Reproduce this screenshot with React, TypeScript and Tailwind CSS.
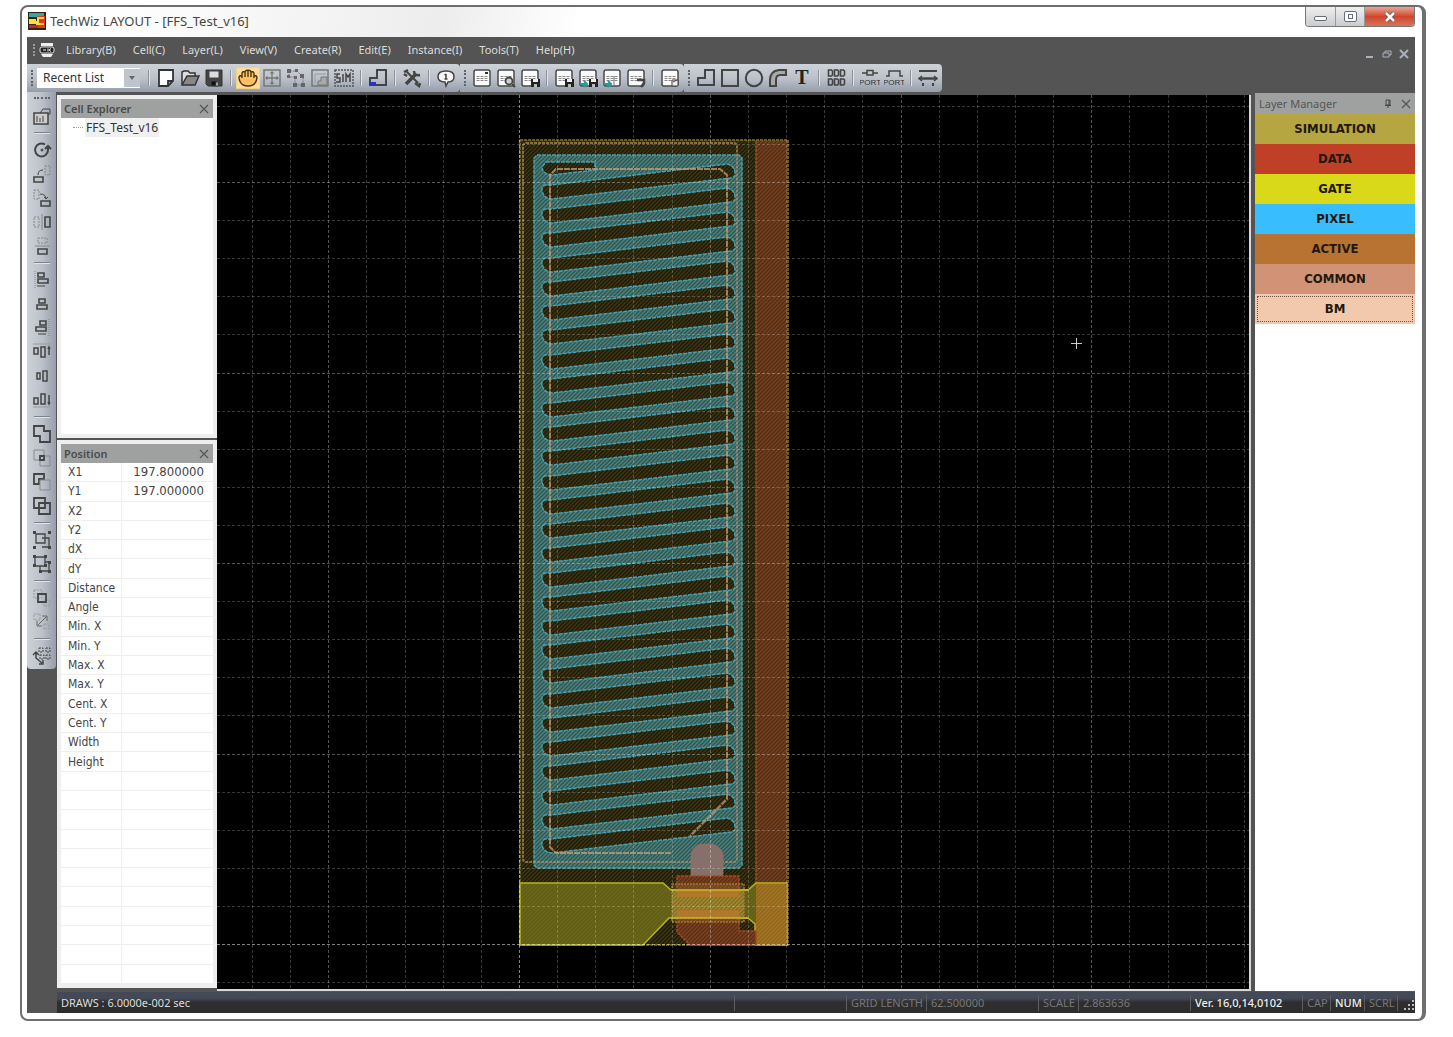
import type { ReactNode } from "react"
import { clsx } from "clsx"

const ui = "font-['Noto_Sans','Open_Sans',sans-serif]"
const tahoma = "font-['DejaVu_Sans_Condensed','DejaVu_Sans',sans-serif]"

const menus = ["Library(B)", "Cell(C)", "Layer(L)", "View(V)", "Create(R)", "Edit(E)", "Instance(I)", "Tools(T)", "Help(H)"]

const layers = [
  { name: "SIMULATION", color: "bg-[#b5a642]" },
  { name: "DATA", color: "bg-[#bf4027]" },
  { name: "GATE", color: "bg-[#d9d919]" },
  { name: "PIXEL", color: "bg-[#38bdff]" },
  { name: "ACTIVE", color: "bg-[#b87333]" },
  { name: "COMMON", color: "bg-[#d19275]" },
  { name: "BM", color: "bg-[#f3c9ad]" },
]

const positionRows = [
  ["X1", "197.800000"], ["Y1", "197.000000"], ["X2", ""], ["Y2", ""], ["dX", ""], ["dY", ""],
  ["Distance", ""], ["Angle", ""], ["Min. X", ""], ["Min. Y", ""], ["Max. X", ""], ["Max. Y", ""],
  ["Cent. X", ""], ["Cent. Y", ""], ["Width", ""], ["Height", ""],
  ...Array.from({ length: 11 }, () => ["\u00a0", ""]),
]

// Small dialog sheet shared by all the cell commands
const sheet = (
  <g>
    <rect x="2" y="2" width="16" height="16" rx="2" fill="#fafafa" stroke="#4a4a4a" strokeWidth="1.5" />
    <path d="M4.500 8.500h11M4.500 10.500h11M4.500 12.500h11" stroke="#8a8a8a" strokeDasharray="3 1" />
  </g>
)
const disk = (
  <g stroke="none">
    <rect x="11" y="11" width="9" height="8" fill="#222" />
    <rect x="13" y="11" width="5" height="3" fill="#eee" />
    <rect x="14" y="16" width="3" height="3" fill="#bbb" />
  </g>
)
const greenArrow = <path d="M2 16h7M6 13l3 3-3 3" stroke="#2b9a94" strokeWidth="2" />

type Tool = { name: string; icon: ReactNode; active?: boolean; dim?: boolean }

const fileTools: (Tool | null)[] = [
  { name: "New", icon: <path d="M3 2h14v11l-5 5H3zM17 13h-5v5" fill="#fff" stroke="#333" strokeWidth="1.800" /> },
  { name: "Open", icon: <g stroke="#333" strokeWidth="1.500"><path d="M2 16V4l2-1h4l2 2h5v3" fill="#ddd" /><path d="M2 17L7 8h12l-4 9z" fill="#888" /></g> },
  { name: "Save", icon: <g><path d="M2 2h16v16H4l-2-2z" fill="#444" stroke="#333" /><path d="M5 3h10v7H5z" fill="#ddd" /><path d="M7 13h7v5H7z" fill="#111" /><path d="M12 14h2v4h-2z" fill="#fff" /></g> },
  null,
  { name: "Pan", active: true, icon: <path d="M5 17Q1 14 1 9q1-2 3-1V5q1-2 3-1 1-2.500 3-1.500 2-1 3 1.500 2-1 3 1v3q2-1 3 1 0 5-4 8-5 2-10 0zM4 8v2M7 4v5M10 3v6M13 4v5M16 5v5" fill="#ffc064" stroke="#4a3510" strokeWidth="1.400" /> },
  { name: "Fit", dim: true, icon: <g><rect x="2" y="2" width="16" height="16" strokeWidth="1.500" /><path d="M10 4v12M4 10h12M8.500 5.500L10 4l1.500 1.500M8.500 14.500L10 16l1.500-1.500M5.500 8.500L4 10l1.500 1.500M14.500 8.500L16 10l-1.500 1.500" strokeWidth="1.300" /></g> },
  { name: "Edit points", dim: true, icon: <g><path d="M3 8V3h8M11 3l6 6v8H9V9H3" strokeDasharray="2 1" /><path d="M1 1h4v4H1zM9 1h3v3H9zM14 6h4v4h-4zM15 15h4v4h-4zM7 15h4v4H7zM1 7h3v3H1zM8 8h3v3H8z" fill="#666" stroke="none" /></g> },
  { name: "Zoom window", dim: true, icon: <g><rect x="2" y="2" width="16" height="16" strokeWidth="1.500" /><path d="M5 15V6h11" stroke="#999" /><path d="M11 9h6v8H8v-4h3z" fill="#aaa" /></g> },
  { name: "Simulation area", icon: <g stroke="#555"><rect x="1" y="2" width="18" height="16" strokeDasharray="2 1" strokeWidth="1.500" /><path d="M6 6H3v4h3v4H2M9 6v8M12 14V6l2 3 2-3v8" stroke="#444" strokeWidth="1.500" /></g> },
  null,
  { name: "Origin", icon: <g><path d="M2 17v-7h7V2h9v15z" strokeWidth="2" /><path d="M1 14h7v4H1z" fill="#2733c9" stroke="none" /></g> },
  null,
  { name: "Options", icon: <g><path d="M4 3l12 12" strokeWidth="2" /><path d="M14 6L4 16" strokeWidth="3.500" /><path d="M12 3q0 5 6 4M2 4l4-2M13 15l4 3 1-3M2 6l3 2" strokeWidth="2.500" /><path d="M7 13l3-3" stroke="#3a3f96" /></g> },
  null,
  { name: "Help", icon: <g><path d="M9 14Q2 14 2 8.500T10 3t8 5.500-6 5.500l-2 4z" fill="#f5f5f5" strokeWidth="1.500" /><path d="M10 6v5M8.500 7L10 6M8.500 11h3" strokeWidth="1.500" /></g> },
]

const cellTools: (Tool | null)[] = [
  { name: "Cell", icon: <g>{sheet}<path d="M13 4h3v2h-3z" fill="#333" stroke="none" /></g> },
  { name: "Find cell", icon: <g>{sheet}<circle cx="13" cy="13" r="3.500" fill="#ccc" strokeWidth="1.800" /><path d="M16 16l3 3" strokeWidth="2" /></g> },
  { name: "Save cell", icon: <g>{sheet}{disk}</g> },
  null,
  { name: "Save library", icon: <g>{sheet}{disk}</g> },
  { name: "Export library", icon: <g>{sheet}{disk}{greenArrow}</g> },
  { name: "Import library", icon: <g>{sheet}{greenArrow}<path d="M12 8v9" stroke="#777" /></g> },
  { name: "Convert", icon: <g>{sheet}<path d="M11 12h7v3l-3 4" strokeWidth="2.500" /></g> },
  null,
  { name: "Report", icon: <g>{sheet}<path d="M12 12h6v6h-6z" fill="#eee" /><path d="M13 14l4-2" /></g> },
]

const drawTools: (Tool | null)[] = [
  { name: "Polygon", icon: <path d="M2 17V10h7V2h9v15z" strokeWidth="2" /> },
  { name: "Rectangle", icon: <rect x="2" y="2" width="16" height="16" strokeWidth="2" /> },
  { name: "Circle", icon: <circle cx="10" cy="10" r="8.200" strokeWidth="2" /> },
  { name: "Path", icon: <path d="M2 18v-6q0-9 9-10h7v5h-6q-4 0-4 5v6z" fill="#aaa" strokeWidth="2" /> },
  { name: "Text", icon: <text x="10" y="16" textAnchor="middle" fill="#222" stroke="none" className="font-['Liberation_Serif',serif] text-[20px] font-bold">T</text> },
  null,
  { name: "Array", icon: <path d="M2.500 2v6h3l1-1V3l-1-1zM8.500 2v6h3l1-1V3l-1-1zM14.500 2v6h3l1-1V3l-1-1zM2.500 11v6h3l1-1v-4l-1-1zM8.500 11v6h3l1-1v-4l-1-1zM14.500 11v6h3l1-1v-4l-1-1z" strokeWidth="1.600" /> },
  null,
  { name: "Port", icon: <g><path d="M2 5h5M13 5h5M7 2.500h6V7H7z" strokeWidth="1.500" /><text x="10" y="17" textAnchor="middle" fill="#333" stroke="none" className="font-['Liberation_Sans',sans-serif] text-[8px]">PORT</text></g> },
  { name: "Port edge", icon: <g><path d="M2 8h3V3h11v5h3" strokeWidth="1.500" /><text x="10" y="17" textAnchor="middle" fill="#333" stroke="none" className="font-['Liberation_Sans',sans-serif] text-[8px]">PORT</text></g> },
  null,
  { name: "Ruler", icon: <g><path d="M1 3h18" strokeWidth="2" /><path d="M2 10.500h16" strokeWidth="2.500" /><path d="M4 8l-3 2.500L4 13M16 8l3 2.500-3 2.500" strokeWidth="1.500" /><path d="M5 15v3M15 15v3" strokeWidth="2" /></g> },
]

const sideTools: (Tool | null)[] = [
  { name: "Properties", icon: <g><path d="M2 7h14v11H2z" fill="#ccc" strokeWidth="1.500" /><path d="M8 7l3-4h7v5h-2M5 10v6M8 12v4M11 10v6" /></g> },
  null,
  { name: "Rotate", icon: <g><path d="M13 4.500A6.500 6.500 0 1 0 16 10V7M13 9l3-3 3 3" strokeWidth="2" /><circle cx="10" cy="10" r="1.500" fill="#555" stroke="none" /></g> },
  { name: "Rotate left", icon: <g><path d="M2 13h9v5H2z" strokeWidth="1.600" /><path d="M6 11q0-5 5-5" /><path d="M13 2h5v9h-5z" stroke="#888" strokeDasharray="2 1" /></g> },
  { name: "Rotate right", icon: <g><path d="M9 13h9v5H9z" strokeWidth="1.600" /><path d="M8 6q6 0 6 5M12 9l2 2 2-2" /><path d="M2 2h5v9H2z" stroke="#888" strokeDasharray="2 1" /></g> },
  { name: "Flip horizontal", icon: <g><path d="M13 5h5v10h-5z" strokeWidth="1.600" /><path d="M2 5h5v10H2z" stroke="#888" strokeDasharray="2 1" /><path d="M10 2v16" stroke="#888" /></g> },
  { name: "Flip vertical", icon: <g><path d="M6 13h9v5H6z" strokeWidth="1.600" /><path d="M6 2h9v5H6z" stroke="#888" strokeDasharray="2 1" /><path d="M3 10h15" stroke="#888" /></g> },
  null,
  { name: "Align left", icon: <g><path d="M6 3h6v4H6zM6 9h10v4H6z" strokeWidth="1.600" /><path d="M3 1v17" stroke="#888" strokeDasharray="1 1" /><path d="M5 16h8" /></g> },
  { name: "Align center", icon: <path d="M7 5h6v4H7zM5 11h10v4H5z" strokeWidth="1.600" /> },
  { name: "Align right", icon: <g><path d="M8 3h6v4H8zM4 9h10v4H4z" strokeWidth="1.600" /><path d="M17 1v17" stroke="#888" strokeDasharray="1 1" /><path d="M6 16h8" /></g> },
  { name: "Align top", icon: <g><path d="M2 6h4v6H2zM9 5h4v10H9zM17 5v8M16 7l1-2 1 2" strokeWidth="1.500" /><path d="M1 2h17" stroke="#999" /></g> },
  { name: "Align middle", icon: <path d="M5 7h3v6H5zM11 5h4v10h-4z" strokeWidth="1.500" /> },
  { name: "Align bottom", icon: <g><path d="M2 8h4v6H2zM9 4h4v10H9zM17 5v9M16 12l1 2 1-2" strokeWidth="1.500" /><path d="M1 17h17" stroke="#999" /></g> },
  null,
  { name: "Union", icon: <path d="M2 2h10v5h6v11H8v-6H2z" strokeWidth="1.800" /> },
  { name: "Intersect", icon: <g><path d="M2 2h10v10H2zM8 8h10v10H8z" stroke="#888" /><path d="M8 8h4v4H8z" strokeWidth="1.800" /></g> },
  { name: "Subtract", icon: <g><path d="M2 2h10v5H7v5H2z" strokeWidth="1.800" /><path d="M8 8h10v10H8z" stroke="#888" /></g> },
  { name: "Exclude", icon: <path d="M2 2h11v10H2zM7 7h11v11H7z" strokeWidth="1.800" /> },
  null,
  { name: "Group", icon: <g><path d="M4 4h9v9H4zM10 8h7v9h-7" strokeWidth="1.300" /><path d="M1 1h3v3H1zM16 1h3v3h-3zM1 16h3v3H1zM16 16h3v3h-3z" fill="#444" stroke="none" /></g> },
  { name: "Ungroup", icon: <g><path d="M3 3h10v9H3zM8 12v5h9V8h-4" strokeWidth="1.300" /><path d="M1 1h3v3H1zM12 1h3v3h-3zM1 10h3v3H1zM12 10h3v3h-3zM7 16h3v3H7zM16 16h3v3h-3zM16 7h3v3h-3z" fill="#444" stroke="none" /></g> },
  null,
  { name: "Bring forward", icon: <g><path d="M2 2h8v8H2zM12 12h6v6h-6z" stroke="#999" strokeDasharray="2 1" /><path d="M6 6h8v8H6z" strokeWidth="1.800" /></g> },
  { name: "Swap", icon: <g><path d="M2 2h6v6H2zM12 12h5v5h-5z" stroke="#999" strokeDasharray="2 1" /><path d="M6 13l8-8M10 4h5v5M5 9v5h5" stroke="#666" /></g> },
  null,
  { name: "Duplicate array", icon: <g><path d="M7 2h4v4H7zM14 2h4v4h-4zM14 9h4v4h-4zM8 9h4v4H8z" strokeDasharray="2 1" /><path d="M4 6v6l6 5M1 9l3-3 3 3M7 18h4v-4" strokeWidth="1.500" /></g> },
]

function ToolButton({ tool }: { tool: Tool }) {
  return (
    <button
      type="button"
      aria-label={tool.name}
      className={clsx(
        "flex h-[22px] w-6 shrink-0 items-center justify-center",
        tool.active && "border border-[#f5d087] bg-[#ffdc98]",
      )}
    >
      <svg viewBox="0 0 20 20" className="size-5 shrink-0" fill="none" stroke={tool.dim ? "#777" : "#444"}>
        {tool.icon}
      </svg>
    </button>
  )
}

function ToolGroup({ tools, children }: { tools: (Tool | null)[]; children?: ReactNode }) {
  return (
    <div className="flex items-center rounded-r bg-linear-to-b from-[#cdd1d8] via-[#bdc2ca] to-[#969eaa] pr-[2px]">
      <div className="mx-1 h-4 w-[2px] border-l-2 border-dotted border-[#5f646c]" />
      {children}
      {tools.map((tool, i) =>
        tool ? (
          <ToolButton key={i} tool={tool} />
        ) : (
          <div key={i} className="mx-1 h-4 w-[2px] border-l border-r border-l-[#8b9099] border-r-[#e2e4e8]" />
        ),
      )}
    </div>
  )
}

function PanelTitle({ title }: { title: string }) {
  return (
    <div className={clsx("flex h-[19px] shrink-0 items-center justify-between bg-[#9fa1a0] pl-[3px] pr-1 text-[11px] font-semibold leading-4 text-[#4a4a4a]", ui)}>
      <h2>{title}</h2>
      <CloseButton label={"Close " + title} />
    </div>
  )
}

function CloseButton({ label }: { label: string }) {
  return (
    <button type="button" aria-label={label}>
      <svg viewBox="0 0 10 10" className="size-[10px]" stroke="#555" strokeWidth="1.200">
        <path d="M1 1l8 8M9 1L1 9" />
      </svg>
    </button>
  )
}

const slitPath = (y: number) =>
  `M542 ${y + 6}Q541 ${y + 2} 545 ${y}L551 ${y}L727 ${y - 21}Q735 ${y - 19} 735 ${y - 12}Q736 ${y - 8} 731 ${y - 7}L552 ${y + 14}Q544 ${y + 14} 542 ${y + 6}Z`

function Hatch({ id, base, line }: { id: string; base: string; line: string }) {
  return (
    <pattern id={id} width="4" height="4" patternUnits="userSpaceOnUse">
      <rect width="4" height="4" fill={base} />
      <path d="M-1 1l2-2M0 4l4-4M3 5l2-2" stroke={line} strokeWidth="1.300" />
    </pattern>
  )
}

function LayoutCanvas() {
  const slits = Array.from({ length: 28 }, (_, i) => slitPath(Math.round(185 + i * 24.22))).join("")
  const comb = `M537 155H739L742 158V865L739 868H537L534 865V158ZM546 162H595V170L552 175Q542 174 542 167Z${slits}`
  const gate = "M520 883H663L671 890H748L756 883H787V945H755V924L748 918H669L643 945H520Z"
  const lines = Array.from({ length: 60 }, (_, i) => i - 14)

  return (
    <svg className="size-full bg-black" role="img" aria-label="FFS_Test_v16 layout">
      <defs>
        <Hatch id="sim" base="#1d1a0b" line="#40370f" />
        <Hatch id="data" base="#532e16" line="#78401e" />
        <Hatch id="pixel" base="#315652" line="#4b837e" />
        <Hatch id="gate" base="#605d14" line="#6b6617" />
        <Hatch id="overlap" base="#8e661b" line="#a87623" />
        <Hatch id="active" base="#7d7020" line="#a98a2e" />
        <Hatch id="source" base="#5c2e16" line="#7d4220" />
      </defs>
      <g transform="translate(-217 -95)" fill="none">
        <rect x="520" y="140" width="268" height="805" fill="url(#sim)" stroke="#857723" strokeWidth="1.500" strokeDasharray="3 1" />
        <rect x="756" y="141" width="31" height="804" fill="url(#data)" />
        <path d="M756 141V945" stroke="#a04c27" strokeWidth="1.500" strokeDasharray="3 1" />
        <path d={comb} fill="url(#pixel)" fillRule="evenodd" stroke="#46a0b0" strokeWidth="1.500" strokeDasharray="4 1" />
        <rect x="523" y="143" width="214" height="719" rx="3" stroke="#b58b66" strokeOpacity="0.700" strokeWidth="2" strokeDasharray="3 1" />
        <path d="M671 853H556L550 847V175L556 169H720L727 175V799L690 836" stroke="#c79f7a" strokeOpacity="0.750" strokeWidth="2" strokeDasharray="6 1" />
        <path d={gate} fill="url(#gate)" stroke="#b8b51d" strokeWidth="1.500" />
        <rect x="756" y="884" width="31" height="61" fill="url(#overlap)" />
        <path d="M691 876V855Q693 845 702 844H711Q721 846 723 855V876Z" fill="#87706a" stroke="#a36a59" strokeDasharray="2 1" />
        <path d="M677 876H739V890H677Z" fill="url(#source)" stroke="#a84624" strokeWidth="1.500" strokeDasharray="3 1" />
        <path d="M677 917V932L690 945H756V931H739V917Z" fill="url(#source)" stroke="#a84624" strokeWidth="1.500" strokeDasharray="3 1" />
        <rect x="672" y="884" width="72" height="38" fill="#9b7430" fillOpacity="0.300" stroke="#a1762e" strokeWidth="1.500" strokeDasharray="2 1" />
        <path d="M672 890H744V918H672Z" fill="url(#active)" />
        <path d="M677 890h62v7h-62zM677 910h62v8h-62z" fill="#b0782a" />
        <path d="M677 910h62" stroke="#c8612a" strokeDasharray="3 1" />
        <path d="M671 890H748M671 918H748" stroke="#cdb828" strokeWidth="1.500" />
        {lines.map((n) => (
          <g key={n} stroke="#fff" strokeDasharray="3 2" strokeOpacity={n === 0 ? 0.5 : n % 5 === 0 ? 0.32 : 0.21}>
            <path d={`M${Math.round(519 + n * 38.15)}.5 95V3000`} />
            <path d={`M217 ${Math.round(944 - n * 38.1)}.5H4000`} />
          </g>
        ))}
        <path d="M1071 343.500h11M1076.500 338v11" stroke="#ccc" />
      </g>
    </svg>
  )
}

function TitleBar() {
  return (
    <header className="flex h-[30px] shrink-0 items-start justify-between bg-linear-100 from-white from-5% via-[#ededed] via-30% to-white to-40%">
      <div className="flex items-center gap-1 pl-px pt-[5px]">
        <svg viewBox="0 0 18 18" className="size-[18px]">
          <path d="M0 0h18v18H0z" fill="#2d2412" />
          <path d="M1 1h15v4H1z" fill="#35a79c" />
          <path d="M9 4h8v12H9z" fill="#e53520" />
          <path d="M1 7h7v5H1z" fill="#f2e33a" />
          <path d="M1 13h9v3H1z" fill="#c8281c" />
          <path d="M4 10h6V6h6M8 12h8M4 8v4" fill="none" stroke="#ffd94a" strokeWidth="2" />
        </svg>
        <h1 className={clsx("text-[13px] leading-4 text-[#444]", ui)}>TechWiz LAYOUT - [FFS_Test_v16]</h1>
      </div>
      <div className="flex h-5 overflow-hidden rounded-b border border-t-0 border-[#777]">
        <button type="button" aria-label="Minimize" className="flex w-[30px] items-center justify-center border-r border-[#999] bg-linear-to-b from-[#efefef] to-[#c9cbcf]">
          <span className="mt-1 h-[5px] w-[13px] rounded-xs border border-[#666c7c] bg-white" />
        </button>
        <button type="button" aria-label="Maximize" className="flex w-[29px] items-center justify-center border-r border-[#999] bg-linear-to-b from-[#efefef] to-[#c9cbcf]">
          <span className="flex h-[11px] w-[13px] items-center justify-center rounded-xs border border-[#666c7c] bg-white">
            <span className="h-[5px] w-[5px] border border-[#666c7c]" />
          </span>
        </button>
        <button type="button" aria-label="Close" className="flex w-[49px] items-center justify-center bg-linear-to-b from-[#e6a596] via-[#cf452b] via-50% to-[#d9735b]">
          <svg viewBox="0 0 12 10" className="h-[10px] w-3">
            <path d="M2 1l8 8M10 1L2 9" stroke="#5c4a50" strokeWidth="4" />
            <path d="M2 1l8 8M10 1L2 9" stroke="#fff" strokeWidth="2.500" />
          </svg>
        </button>
      </div>
    </header>
  )
}

function MenuBar() {
  return (
    <nav className={clsx("flex h-[27px] shrink-0 items-center justify-between pb-px text-[11px] leading-4 text-[#dcdcdc]", ui)}>
      <div className="flex items-center">
        <div className="ml-[6px] h-3 border-l-2 border-dotted border-[#999]" />
        <svg viewBox="0 0 16 14" className="ml-1 mr-[11px] h-[14px] w-4">
          <path d="M2 0h12v3H2zM2 11h12l-2 3H4z" fill="#eee" />
          <rect x="1" y="4" width="14" height="6" rx="2" fill="#222" stroke="#ddd" />
          <path d="M4 7h3M9 5.500v3M12 5.500l-2 1.500 2 1.500" stroke="#eee" fill="none" />
        </svg>
        <div className="flex gap-[17px]">
          {menus.map((m) => (
            <button key={m} type="button">{m}</button>
          ))}
        </div>
      </div>
      <div className="flex gap-[7px] pr-[6px] pt-2">
        <button type="button" aria-label="Minimize document">
          <svg viewBox="0 0 10 10" className="size-[10px]"><path d="M1 8h7" stroke="#a9b0bc" strokeWidth="2" /></svg>
        </button>
        <button type="button" aria-label="Restore document">
          <svg viewBox="0 0 10 10" className="size-[10px]" fill="none" stroke="#a9b0bc"><path d="M1 4h6v4H1zM3 4V2h6v4H7" /></svg>
        </button>
        <button type="button" aria-label="Close document">
          <svg viewBox="0 0 10 10" className="size-[10px]" stroke="#a9b0bc" strokeWidth="2"><path d="M1 1l8 8M9 1L1 9" /></svg>
        </button>
      </div>
    </nav>
  )
}

function StatusBar() {
  const cell = "h-4 shrink-0 border-l border-[#5a5d63] pl-1"
  return (
    <footer className={clsx("ml-[30px] flex h-[21px] shrink-0 items-center bg-linear-to-b from-[#434957] from-30% to-[#2e2e2e] to-50% text-[11px] leading-4 text-[#777]", ui)}>
      <span className="flex-1 pl-1 text-[#ddd]">DRAWS : 6.0000e-002 sec</span>
      <span className={clsx(cell, "w-28")} />
      <span className={clsx(cell, "w-20")}>GRID LENGTH</span>
      <span className={clsx(cell, "w-28")}>62.500000</span>
      <span className={clsx(cell, "w-10")}>SCALE</span>
      <span className={clsx(cell, "w-28")}>2.863636</span>
      <span className={clsx(cell, "w-28 font-medium text-[#eee]")}>Ver. 16,0,14,0102</span>
      <span className={clsx(cell, "w-7")}>CAP</span>
      <span className={clsx(cell, "w-[34px] font-medium text-[#eee]")}>NUM</span>
      <span className={clsx(cell, "w-[33px]")}>SCRL</span>
      <span className={clsx(cell, "flex w-[18px] items-end justify-end")}>
        <svg viewBox="0 0 12 12" className="size-3" fill="#bbb">
          <path d="M9 1h2v2H9zM9 5h2v2H9zM5 5h2v2H5zM9 9h2v2H9zM5 9h2v2H5zM1 9h2v2H1z" />
        </svg>
      </span>
    </footer>
  )
}

export default function App() {
  return (
    <div className="h-screen bg-white pb-4 pl-5 pr-[27px] pt-[5px]">
      <div className="flex h-full flex-col overflow-hidden rounded-lg border-2 border-r-4 border-[#6e6e6e] bg-white pb-[6px] pl-[5px] pr-[7px]">
        <TitleBar />
        <main className="flex min-h-0 flex-1 flex-col bg-[#545454]">
          <MenuBar />
          <div className="flex h-7 shrink-0">
            <ToolGroup tools={fileTools}>
              <select aria-label="Recent List" className={clsx("mr-1 h-5 w-[103px] appearance-none bg-white pl-[6px] text-[12px] leading-4 text-[#333]", ui)}>
                <option>Recent List</option>
              </select>
              <svg viewBox="0 0 16 18" className="-ml-5 mr-1 h-[18px] w-4 shrink-0">
                <path d="M0 0h16v18H0z" fill="#c0c4cb" />
                <path d="M5 7h6l-3 4z" fill="#666" />
              </svg>
              <div className="mx-1 h-4 w-[2px] border-l border-r border-l-[#8b9099] border-r-[#e2e4e8]" />
            </ToolGroup>
            <ToolGroup tools={cellTools} />
            <ToolGroup tools={drawTools} />
          </div>
          <div className="flex min-h-0 flex-1 pb-px">
            <aside className="flex w-[29px] shrink-0 flex-col items-center self-start rounded-b bg-linear-to-r from-[#cdd1d8] via-[#bdc2ca] to-[#969eaa] pb-px">
              <div className="mb-[5px] mt-[5px] h-[2px] w-4 border-t-2 border-dotted border-[#5f646c]" />
              {sideTools.map((tool, i) =>
                tool ? (
                  <div key={i} className="flex h-6 items-center"><ToolButton tool={tool} /></div>
                ) : (
                  <div key={i} className="my-1 h-[2px] w-4 border-b border-t border-b-[#e2e4e8] border-t-[#7d828a]" />
                ),
              )}
            </aside>
            <div className="ml-px mt-[3px] flex w-40 shrink-0 flex-col gap-[2px] pb-[3px]">
              <section className="flex h-[343px] shrink-0 flex-col border-4 border-[#eee] bg-white">
                <PanelTitle title="Cell Explorer" />
                <div className="flex items-center pl-3">
                  <span className="mr-[2px] w-[10px] border-t border-dotted border-[#999]" />
                  <span className={clsx("bg-[#f0f0f0] px-px text-[12px] leading-[19px] text-[#333]", ui)}>FFS_Test_v16</span>
                </div>
              </section>
              <section className="flex min-h-0 flex-1 flex-col border-4 border-[#eee] bg-white">
                <PanelTitle title="Position" />
                <div className="min-h-0 flex-1">
                  <table className={clsx("h-full w-full table-fixed border-collapse text-[12px] leading-4 text-[#444]", tahoma)}>
                    <tbody>
                      {positionRows.map(([label, value], i) => (
                        <tr key={i} className="border-b border-[#eee]">
                          <th scope="row" className="w-[60px] whitespace-nowrap border-r border-[#eee] pl-[7px] text-left font-normal">{label}</th>
                          <td className="pr-[9px] text-right text-[13px]">{value}</td>
                        </tr>
                      ))}
                    </tbody>
                  </table>
                </div>
              </section>
            </div>
            <div className="mt-[3px] min-w-0 flex-1 border-b-2 border-r-2 border-[#d8d8d8]">
              <LayoutCanvas />
            </div>
            <section className="ml-1 mt-px w-40 shrink-0 bg-white">
              <div className={clsx("flex h-[21px] items-center bg-[#9fa1a0] px-1 text-[11px] leading-4 text-[#555]", ui)}>
                <h2 className="flex-1">Layer Manager</h2>
                <button type="button" aria-label="Pin Layer Manager" className="mr-2">
                  <svg viewBox="0 0 10 10" className="size-[10px]" fill="none" stroke="#444"><path d="M3 1h4v5H3zM2 6.500h6M5 6v3M6 1v5" /></svg>
                </button>
                <CloseButton label="Close Layer Manager" />
              </div>
              <ul>
                {layers.map((l) => (
                  <li key={l.name}>
                    <button
                      type="button"
                      className={clsx("flex h-[30px] w-full items-center justify-center text-[13px] font-bold leading-4 text-[#22180c]", l.color, tahoma, l.name === "BM" && "p-[2px]")}
                    >
                      {l.name === "BM" ? (
                        <span className="flex h-full w-full items-center justify-center border border-dotted border-[#6b5646]">{l.name}</span>
                      ) : (
                        l.name
                      )}
                    </button>
                  </li>
                ))}
              </ul>
            </section>
          </div>
          <StatusBar />
        </main>
      </div>
    </div>
  )
}
